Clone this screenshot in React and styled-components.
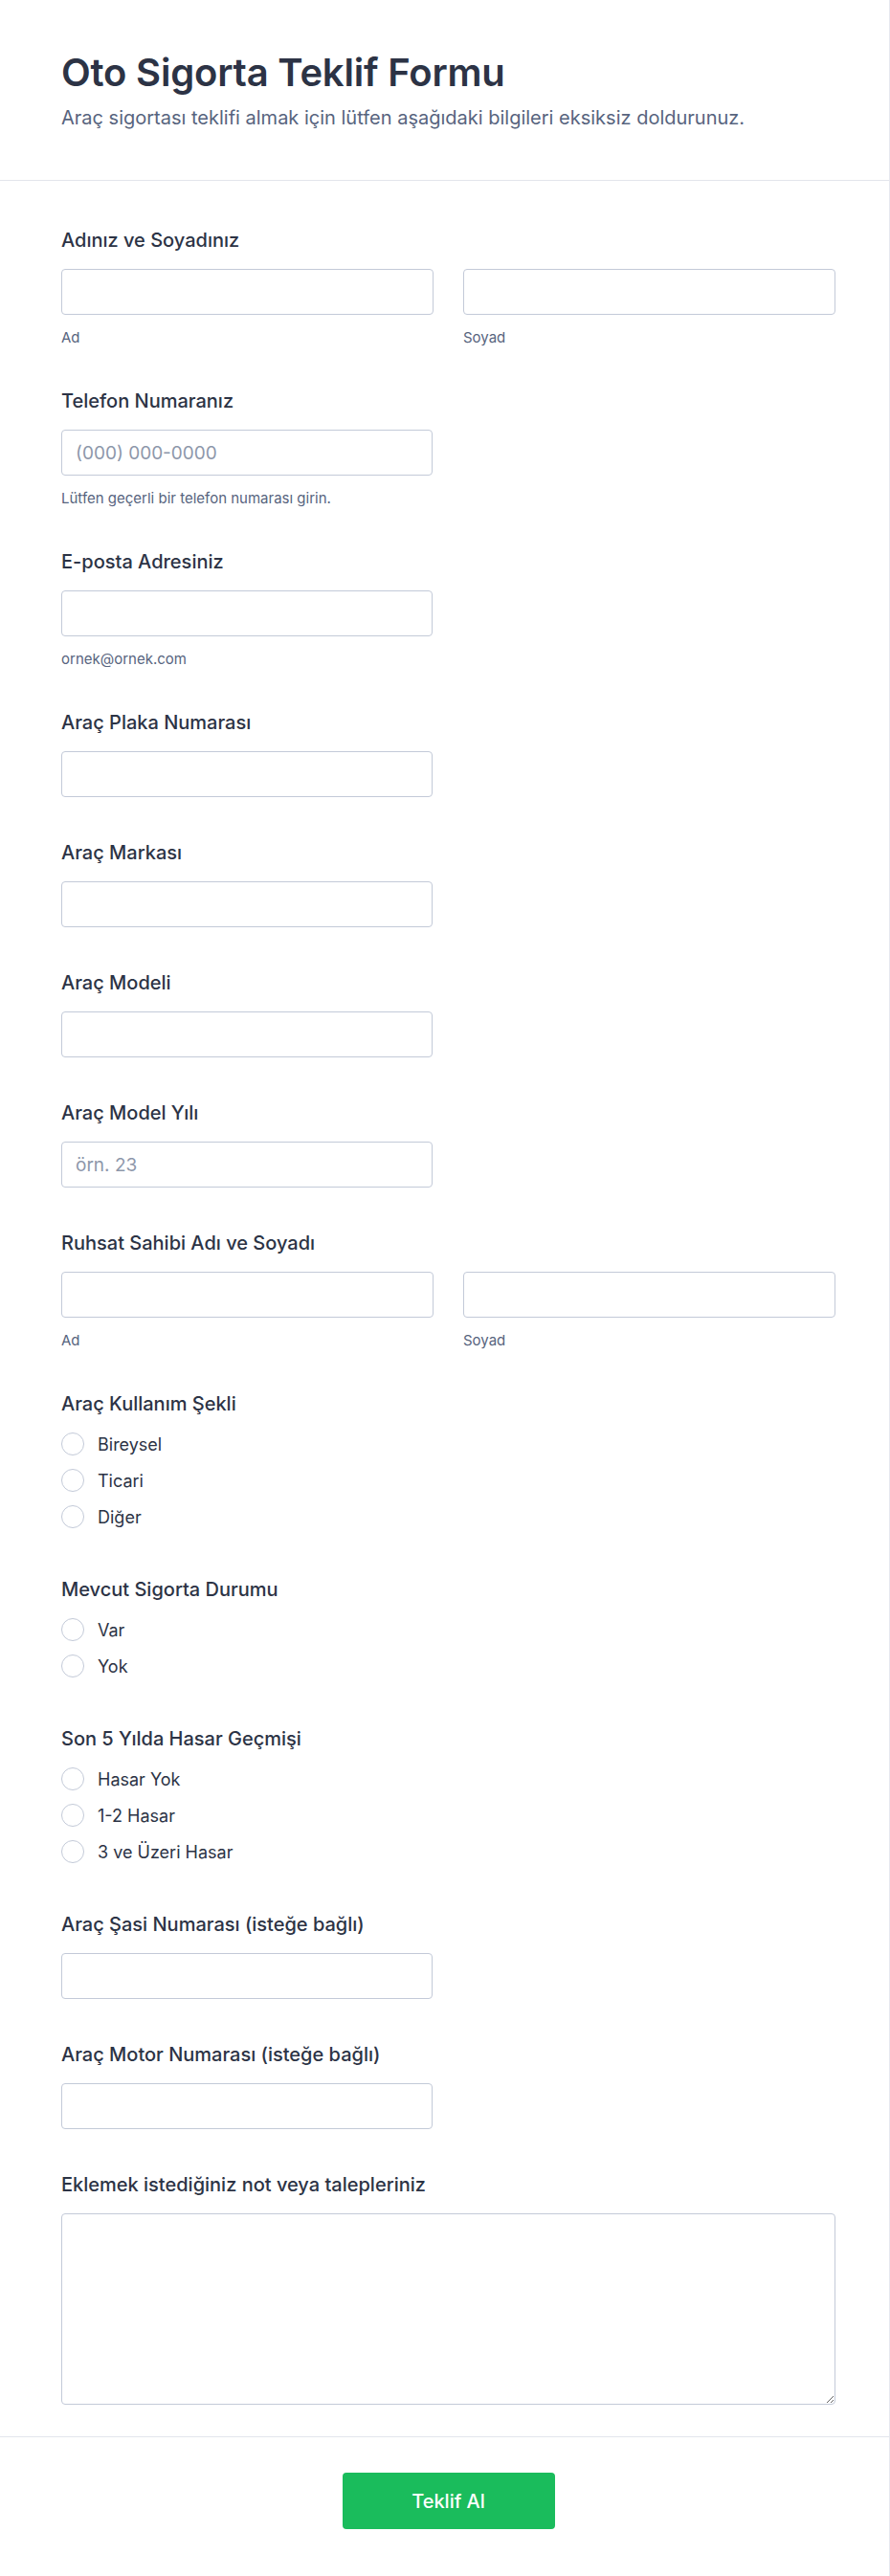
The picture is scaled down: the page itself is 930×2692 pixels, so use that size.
import React from 'react';
import styled, { createGlobalStyle } from 'styled-components';

const GlobalStyle = createGlobalStyle`
  * { box-sizing: border-box; }
  body {
    margin: 0;
    background: #fff;
    font-family: Inter, 'Noto Sans', sans-serif;
    color: #2c3345;
  }
`;

const Page = styled.div`
  width: 930px;
  min-height: 2692px;
  background: #fff;
  border-right: 1px solid #e6e8ef;
`;

const Header = styled.header`
  padding: 52px 56px 51px 64px;
  border-bottom: 1px solid #e3e5ec;
`;

const Title = styled.h1`
  margin: 0;
  font-size: 40px;
  line-height: 48px;
  font-weight: 600;
  color: #2c3345;
  letter-spacing: -0.2px;
`;

const Subtitle = styled.p`
  margin: 9px 0 0;
  font-size: 20px;
  line-height: 28px;
  color: #57647e;
`;

const Body = styled.div`
  padding: 50px 56px 33px 64px;
  display: flex;
  flex-direction: column;
  gap: 46px;
  border-bottom: 1px solid #e3e5ec;
`;

const Field = styled.div`
  display: flex;
  flex-direction: column;
  padding-bottom: ${({ $extra }) => $extra || 0}px;
`;

const Label = styled.label`
  display: block;
  font-size: 20px;
  line-height: 24px;
  font-weight: 500;
  color: #2c3345;
  margin-bottom: 18px;
`;

const Row = styled.div`
  display: grid;
  grid-template-columns: 1fr 1fr;
  column-gap: 31px;
`;

const Col = styled.div`
  display: flex;
  flex-direction: column;
`;

const Input = styled.input`
  width: ${({ $half }) => ($half ? '388px' : '100%')};
  height: 48px;
  padding: 0 14px;
  border: 1px solid #c3cad8;
  border-radius: 4px;
  font-family: inherit;
  font-size: 19px;
  color: #2c3345;
  background: #fff;
  outline: none;

  &::placeholder {
    color: #8d97aa;
  }
`;

const TextArea = styled.textarea`
  width: 100%;
  height: 200px;
  padding: 12px 14px;
  border: 1px solid #c3cad8;
  border-radius: 4px;
  font-family: inherit;
  font-size: 18px;
  color: #2c3345;
  resize: vertical;
  outline: none;
  display: block;
`;

const Hint = styled.span`
  margin-top: 16px;
  font-size: 15px;
  line-height: 16px;
  color: #57647e;
`;

const Options = styled.div`
  display: flex;
  flex-direction: column;
  gap: 10px;
  margin-top: -2px;
`;

const Option = styled.label`
  display: flex;
  align-items: center;
  gap: 14px;
  height: 28px;
  font-size: 18px;
  color: #2c3345;
`;

const Circle = styled.span`
  width: 24px;
  height: 24px;
  border-radius: 50%;
  border: 1.5px solid #c3cad8;
  background: #fff;
  flex-shrink: 0;
`;

const Footer = styled.div`
  padding: 37px 56px 50px 64px;
  display: flex;
  justify-content: center;
`;

const SubmitButton = styled.button`
  width: 222px;
  height: 59px;
  border: none;
  border-radius: 4px;
  background: #1abc5c;
  color: #fff;
  font-family: inherit;
  font-size: 20px;
  font-weight: 500;
  cursor: pointer;
`;

const NameField = ({ label }) => (
  <Field>
    <Label>{label}</Label>
    <Row>
      <Col>
        <Input />
        <Hint>Ad</Hint>
      </Col>
      <Col>
        <Input />
        <Hint>Soyad</Hint>
      </Col>
    </Row>
  </Field>
);

const TextField = ({ label, placeholder, hint }) => (
  <Field>
    <Label>{label}</Label>
    <Input $half placeholder={placeholder} />
    {hint && <Hint>{hint}</Hint>}
  </Field>
);

const RadioField = ({ label, options }) => (
  <Field $extra={4}>
    <Label>{label}</Label>
    <Options>
      {options.map((o) => (
        <Option key={o}>
          <Circle />
          {o}
        </Option>
      ))}
    </Options>
  </Field>
);

export default function App() {
  return (
    <Page>
      <GlobalStyle />
      <Header>
        <Title>Oto Sigorta Teklif Formu</Title>
        <Subtitle>Araç sigortası teklifi almak için lütfen aşağıdaki bilgileri eksiksiz doldurunuz.</Subtitle>
      </Header>
      <Body>
        <NameField label="Adınız ve Soyadınız" />
        <TextField label="Telefon Numaranız" placeholder="(000) 000-0000" hint="Lütfen geçerli bir telefon numarası girin." />
        <TextField label="E-posta Adresiniz" hint="ornek@ornek.com" />
        <TextField label="Araç Plaka Numarası" />
        <TextField label="Araç Markası" />
        <TextField label="Araç Modeli" />
        <TextField label="Araç Model Yılı" placeholder="örn. 23" />
        <NameField label="Ruhsat Sahibi Adı ve Soyadı" />
        <RadioField label="Araç Kullanım Şekli" options={['Bireysel', 'Ticari', 'Diğer']} />
        <RadioField label="Mevcut Sigorta Durumu" options={['Var', 'Yok']} />
        <RadioField label="Son 5 Yılda Hasar Geçmişi" options={['Hasar Yok', '1-2 Hasar', '3 ve Üzeri Hasar']} />
        <TextField label="Araç Şasi Numarası (isteğe bağlı)" />
        <TextField label="Araç Motor Numarası (isteğe bağlı)" />
        <Field>
          <Label>Eklemek istediğiniz not veya talepleriniz</Label>
          <TextArea />
        </Field>
      </Body>
      <Footer>
        <SubmitButton type="button">Teklif Al</SubmitButton>
      </Footer>
    </Page>
  );
}
